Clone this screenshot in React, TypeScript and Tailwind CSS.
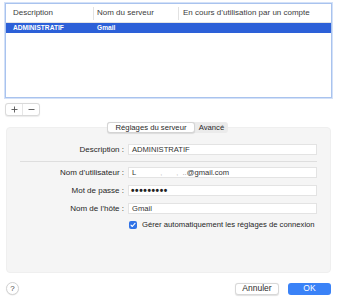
export default function App() {
  return (
    <div className="w-[337px] h-[300px] bg-white flex flex-col font-['Liberation_Sans',Arial,sans-serif] text-[8px] text-[#262626] overflow-hidden">
      {/* Account table */}
      <div className="mx-[5px] mt-[3px] h-[95px] border border-[#a9c3ee] bg-white shadow-[0_0_0_1px_#d3e1f8]">
        <div className="h-[19px] flex items-center border-b border-[#e4e4e4] text-[#3c3c3c]">
          <div className="w-[88px] h-[13px] flex items-center pl-[7px] border-r border-[#e2e2e2]">Description</div>
          <div className="w-[85px] h-[13px] flex items-center pl-[3px] border-r border-[#e2e2e2]">Nom du serveur</div>
          <div className="flex-1 h-[13px] flex items-center pl-[4px]">En cours d’utilisation par un compte</div>
        </div>
        <div className="h-[10px] bg-[#2c60d8] text-white font-bold text-[6.6px] flex items-center">
          <div className="w-[88px] pl-[7px]">ADMINISTRATIF</div>
          <div className="pl-[3px]">Gmail</div>
        </div>
      </div>

      {/* + / - */}
      <div className="ml-[5px] mt-[5px] w-[35px] h-[13px] flex items-center border border-[#dadada] rounded-[3px] bg-white shadow-[0_0.5px_1px_rgba(0,0,0,0.08)]">
        <div className="w-[17px] h-full flex items-center justify-center border-r border-[#e6e6e6]">
          <svg width="7" height="7" viewBox="0 0 7 7">
            <path d="M3.5 0.5v6M0.5 3.5h6" stroke="#555" strokeWidth="0.9" />
          </svg>
        </div>
        <div className="flex-1 h-full flex items-center justify-center">
          <svg width="7" height="7" viewBox="0 0 7 7">
            <path d="M0.5 3.5h6" stroke="#555" strokeWidth="0.9" />
          </svg>
        </div>
      </div>

      {/* Tabs */}
      <div className="relative z-10 ml-[107px] mt-[6px] w-[121px] h-[11px] flex rounded-[3px] bg-[#ebebeb] text-[7.7px] text-[#2a2a2a]">
        <div className="w-[88px] h-full flex items-center justify-center bg-white border border-[#d4d4d4] rounded-[3px] shadow-[0_0.5px_1px_rgba(0,0,0,0.1)]">
          Réglages du serveur
        </div>
        <div className="flex-1 h-full flex items-center justify-center">Avancé</div>
      </div>

      {/* Settings panel */}
      <div className="-mt-[6px] mx-[6px] h-[146px] bg-[#f5f5f5] rounded-[4px] border border-[#efefef] pt-[16px]">
        <Row label="Description :" value="ADMINISTRATIF" />
        <div className="mt-[6px] ml-[13px] w-[297px] h-px bg-[#dedede]" />
        <div className="mt-[5px]">
          <div className="flex items-center h-[11px]">
            <div className="w-[121px] text-right pr-[4px]">Nom d’utilisateur :</div>
            <div className="w-[189px] h-[11px] bg-white border border-[#e3e3e3] pl-[3px] flex items-center text-[7.6px] text-[#333]">
              <span>L</span>
              <span className="ml-[24px] text-[#c4c4c4]">,</span>
              <span className="ml-[14px] text-[#c4c4c4]">,</span>
              <span className="ml-[4px] text-[#999]">..</span>
              <span>@gmail.com</span>
            </div>
          </div>
        </div>
        <div className="mt-[7px] flex items-center h-[11px]">
          <div className="w-[121px] text-right pr-[4px]">Mot de passe :</div>
          <div className="w-[189px] h-[11px] bg-white border border-[#e3e3e3] pl-[2px] flex items-center text-[10px] leading-none tracking-[0.6px] text-[#222] font-bold">
            •••••••••
          </div>
        </div>
        <Row label="Nom de l’hôte :" value="Gmail" className="mt-[7px]" />
        <div className="mt-[6px] ml-[122px] flex items-center h-[9px]">
          <div className="w-[8px] h-[8px] rounded-[2px] bg-[#3072e6] flex items-center justify-center">
            <svg width="6" height="6" viewBox="0 0 6 6">
              <path d="M1 3.2l1.3 1.3L5 1.4" fill="none" stroke="white" strokeWidth="1.1" strokeLinecap="round" strokeLinejoin="round" />
            </svg>
          </div>
          <span className="ml-[5px] text-[7.7px]">Gérer automatiquement les réglages de connexion</span>
        </div>
      </div>

      {/* Bottom buttons */}
      <div className="mt-[9px] px-[6px] flex items-center">
        <div className="w-[13px] h-[13px] rounded-full bg-white border border-[#d3d3d3] shadow-[0_0.5px_1px_rgba(0,0,0,0.1)] flex items-center justify-center text-[8px] text-[#444]">
          ?
        </div>
        <div className="flex-1" />
        <div className="w-[44px] h-[12px] rounded-[3px] bg-white border border-[#d8d8d8] shadow-[0_0.5px_1px_rgba(0,0,0,0.12)] flex items-center justify-center text-[8.5px] text-[#2a2a2a]">
          Annuler
        </div>
        <div className="ml-[9px] w-[43px] h-[12px] rounded-[3px] bg-[#3a82f7] flex items-center justify-center text-[8.5px] text-white">
          OK
        </div>
      </div>
    </div>
  );
}

function Row({ label, value, className = "" }: { label: string; value: string; className?: string }) {
  return (
    <div className={`flex items-center h-[11px] ${className}`}>
      <div className="w-[121px] text-right pr-[4px]">{label}</div>
      <div className="w-[189px] h-[11px] bg-white border border-[#e3e3e3] pl-[3px] flex items-center text-[7.6px] text-[#333]">
        {value}
      </div>
    </div>
  );
}
